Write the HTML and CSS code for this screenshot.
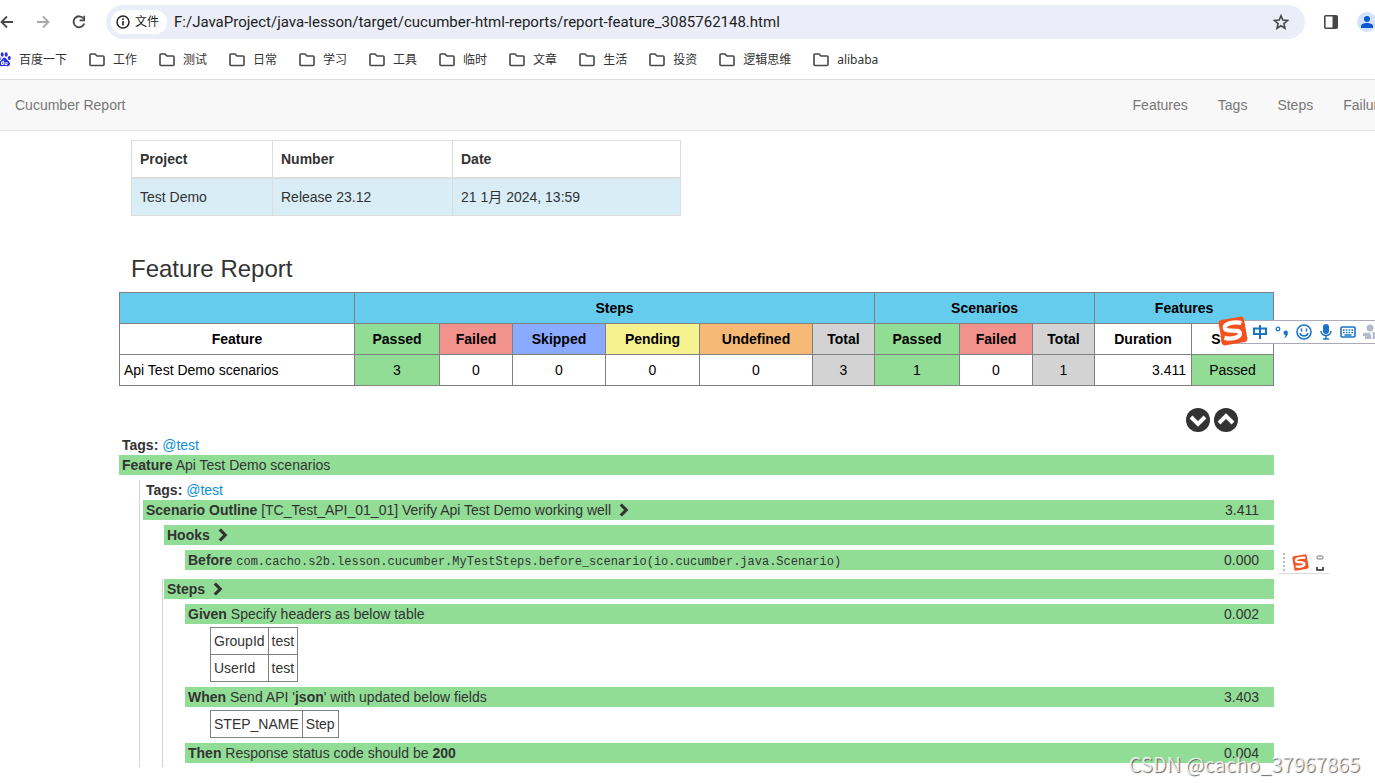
FILE: index.html
```html
<!DOCTYPE html>
<html lang="zh-CN">
<head>
<meta charset="utf-8">
<title>Cucumber Report</title>
<link rel="stylesheet" href="styles.css">
</head>
<body>
<svg class="defs" aria-hidden="true">
  <symbol id="folder" viewBox="0 0 16 14"><path d="M2 1h4l2 2h6a1 1 0 0 1 1 1v7.500a1 1 0 0 1-1 1H2a1 1 0 0 1-1-1V2a1 1 0 0 1 1-1z" fill="none" stroke="#474747" stroke-width="1.600"/></symbol>
  <symbol id="chevron" viewBox="0 0 10 14"><path d="M1.800 1.500L7.200 7l-5.400 5.500" fill="none" stroke="#333" stroke-width="3.200"/></symbol>
  <symbol id="sogou" viewBox="0 0 28 28"><g transform="rotate(-10 14 14)"><rect x="2" y="2" width="24" height="24" rx="3" fill="#f4511e"/><path d="M23 8C17 5.500 7 5.500 7 10c0 4.500 13 2.500 13 7 0 4.500-9 4.500-15 2" fill="none" stroke="#fff" stroke-width="4"/></g></symbol>
</svg>

<header class="browser">
  <div class="toolbar">
    <button class="tool" aria-label="后退"><svg width="14" height="14" viewBox="0 0 14 14"><path d="M13 7H2M7 1.500L1.500 7 7 12.500" fill="none" stroke="#474747" stroke-width="1.800"/></svg></button>
    <button class="tool" aria-label="前进"><svg width="14" height="14" viewBox="0 0 14 14"><path d="M1 7h11M7 1.500L12.500 7 7 12.500" fill="none" stroke="#a8a8a8" stroke-width="1.800"/></svg></button>
    <button class="tool" aria-label="刷新"><svg width="14" height="14" viewBox="0 0 14 14"><path d="M11.500 3.500A5.500 5.500 0 1 0 12.300 8.500" fill="none" stroke="#474747" stroke-width="1.800"/><path d="M13 .8v5.400H7.600V4.600h3.800V.8z" fill="#474747"/></svg></button>
    <div class="omnibox">
      <button class="origin"><svg width="14" height="14" viewBox="0 0 14 14"><circle cx="7" cy="7" r="6" fill="none" stroke="#222" stroke-width="1.500"/><path d="M7 6v4.500M7 3.300v1.600" stroke="#222" stroke-width="1.600"/></svg>文件</button>
      <input class="address" type="text" aria-label="地址" value="F:/JavaProject/java-lesson/target/cucumber-html-reports/report-feature_3085762148.html">
      <button class="tool" aria-label="收藏"><svg width="16" height="16" viewBox="0 0 16 16"><path d="M8 1.800l1.800 4.300 4.700.4-3.600 3.100 1.100 4.600L8 11.700l-4 2.500 1.100-4.600L1.500 6.500l4.700-.4z" fill="none" stroke="#474747" stroke-width="1.600"/></svg></button>
    </div>
    <button class="tool panel" aria-label="侧边栏"><svg width="16" height="16" viewBox="0 0 16 16"><rect x="1.800" y="1.800" width="12.400" height="12.400" rx="1" fill="none" stroke="#474747" stroke-width="1.600"/><path d="M9.500 2H14v12H9.500z" fill="#474747"/></svg></button>
    <button class="tool avatar" aria-label="用户"><svg width="20" height="20" viewBox="0 0 20 20"><circle cx="10" cy="10" r="10" fill="#d3e3fd"/><circle cx="10" cy="7" r="3" fill="#0b57d0"/><path d="M4 16v-2c0-4 12-4 12 0v2z" fill="#0b57d0"/></svg></button>
  </div>
  <nav class="bookmarks" aria-label="书签">
    <a href="#"><svg class="paw" width="13" height="15" viewBox="0 0 13 15"><g fill="#2932e1"><ellipse cx="1.200" cy="6.500" rx="1.500" ry="2"/><ellipse cx="4.200" cy="2.500" rx="1.500" ry="2.200"/><ellipse cx="8.200" cy="2.500" rx="1.500" ry="2.200"/><ellipse cx="11.300" cy="6" rx="1.500" ry="2"/><path d="M6.200 5.500C4.500 5.500 4 8 2 9.500c-2 1.800-1 5 2 4.800 2-.3 3-.3 5 0 3 .2 4-2.800 2-4.800C9 8 8 5.500 6.200 5.500z"/></g><path d="M5.300 8.500v4H3.500V10h1.800M7 10v2.500h2V10" fill="none" stroke="#fff"/></svg>百度一下</a>
    <a href="#"><svg class="folder"><use href="#folder"/></svg>工作</a>
    <a href="#"><svg class="folder"><use href="#folder"/></svg>测试</a>
    <a href="#"><svg class="folder"><use href="#folder"/></svg>日常</a>
    <a href="#"><svg class="folder"><use href="#folder"/></svg>学习</a>
    <a href="#"><svg class="folder"><use href="#folder"/></svg>工具</a>
    <a href="#"><svg class="folder"><use href="#folder"/></svg>临时</a>
    <a href="#"><svg class="folder"><use href="#folder"/></svg>文章</a>
    <a href="#"><svg class="folder"><use href="#folder"/></svg>生活</a>
    <a href="#"><svg class="folder"><use href="#folder"/></svg>投资</a>
    <a href="#"><svg class="folder"><use href="#folder"/></svg>逻辑思维</a>
    <a href="#"><svg class="folder"><use href="#folder"/></svg>alibaba</a>
  </nav>
</header>

<nav class="navbar">
  <span class="brand">Cucumber Report</span>
  <div class="links"><a href="#">Features</a><a href="#">Tags</a><a href="#">Steps</a><a href="#">Failures</a></div>
</nav>

<main class="report">
  <table class="build">
    <colgroup><col class="c-project"><col class="c-number"><col></colgroup>
    <thead><tr><th>Project</th><th>Number</th><th>Date</th></tr></thead>
    <tbody><tr><td>Test Demo</td><td>Release 23.12</td><td>21 1月 2024, 13:59</td></tr></tbody>
  </table>

  <h2>Feature Report</h2>

  <table class="stats">
    <colgroup><col class="w235"><col class="w85"><col class="w73"><col class="w93"><col class="w94"><col class="w113"><col class="w62"><col class="w85"><col class="w73"><col class="w62"><col class="w97"><col class="w82"></colgroup>
    <thead>
      <tr class="groups"><th></th><th colspan="6">Steps</th><th colspan="3">Scenarios</th><th colspan="2">Features</th></tr>
      <tr><th>Feature</th><th class="passed">Passed</th><th class="failed">Failed</th><th class="skipped">Skipped</th><th class="pending">Pending</th><th class="undefined">Undefined</th><th class="total">Total</th><th class="passed">Passed</th><th class="failed">Failed</th><th class="total">Total</th><th>Duration</th><th>Status</th></tr>
    </thead>
    <tbody>
      <tr><td class="name">Api Test Demo scenarios</td><td class="passed">3</td><td>0</td><td>0</td><td>0</td><td>0</td><td class="total">3</td><td class="passed">1</td><td>0</td><td class="total">1</td><td class="duration">3.411</td><td class="passed">Passed</td></tr>
    </tbody>
  </table>

  <div class="toggles">
    <button aria-label="Expand all"><svg width="24" height="24" viewBox="0 0 24 24"><circle cx="12" cy="12" r="12" fill="#333"/><path d="M5 9l7 7 7-7" fill="none" stroke="#fff" stroke-width="4"/></svg></button>
    <button aria-label="Collapse all"><svg width="24" height="24" viewBox="0 0 24 24"><circle cx="12" cy="12" r="12" fill="#333"/><path d="M5 15l7-7 7 7" fill="none" stroke="#fff" stroke-width="4"/></svg></button>
  </div>

  <section class="feature">
    <div class="tags"><b>Tags:</b> <a href="#">@test</a></div>
    <div class="bar"><span><b>Feature</b> Api Test Demo scenarios</span></div>
    <div class="element">
      <div class="tags"><b>Tags:</b> <a href="#">@test</a></div>
      <div class="bar"><span><b>Scenario Outline</b> [TC_Test_API_01_01] Verify Api Test Demo working well <svg class="chevron"><use href="#chevron"/></svg></span><span>3.411</span></div>
      <div class="group">
        <div class="bar"><span><b>Hooks</b> <svg class="chevron"><use href="#chevron"/></svg></span></div>
        <div class="step">
          <div class="bar"><span><b>Before</b> <code>com.cacho.s2b.lesson.cucumber.MyTestSteps.before_scenario(io.cucumber.java.Scenario)</code></span><span>0.000</span></div>
        </div>
      </div>
      <div class="group steps">
        <div class="bar"><span><b>Steps</b> <svg class="chevron"><use href="#chevron"/></svg></span></div>
        <div class="step">
          <div class="bar"><span><b>Given</b> Specify headers as below table</span><span>0.002</span></div>
          <table class="args"><tr><td>GroupId</td><td>test</td></tr><tr><td>UserId</td><td>test</td></tr></table>
        </div>
        <div class="step">
          <div class="bar"><span><b>When</b> Send API '<b>json</b>' with updated below fields</span><span>3.403</span></div>
          <table class="args"><tr><td>STEP_NAME</td><td>Step</td></tr></table>
        </div>
        <div class="step">
          <div class="bar"><span><b>Then</b> Response status code should be <b>200</b></span><span>0.004</span></div>
        </div>
      </div>
    </div>
  </section>
</main>

<div class="ime">
  <svg class="ime-logo"><use href="#sogou"/></svg>
  <div class="ime-keys">
    <svg width="16" height="16" viewBox="0 0 16 16"><path d="M2 4.500h12v5.500H2zM8 1v14" fill="none" stroke="#1a73c8" stroke-width="2"/></svg>
    <svg width="16" height="16" viewBox="0 0 16 16"><circle cx="4" cy="5" r="1.800" fill="none" stroke="#1a73c8" stroke-width="1.300"/><path d="M9.500 8.800a2.200 2.200 0 1 1 4.400 0c0 3-1.500 4.700-4 5.400 1-1 1.600-2 1.500-3.200-1.100 0-1.900-.9-1.900-2.200z" fill="#1a73c8"/></svg>
    <svg width="16" height="16" viewBox="0 0 16 16"><circle cx="8" cy="8" r="7" fill="none" stroke="#1a73c8" stroke-width="1.600"/><path d="M5.500 4.500v3M10.500 4.500v3M4 9c1 4 7 4 8 0" fill="none" stroke="#1a73c8" stroke-width="1.500"/></svg>
    <svg width="16" height="16" viewBox="0 0 16 16"><rect x="5" y="0" width="6" height="10" rx="3" fill="#1a73c8"/><path d="M3 7c0 6 10 6 10 0M8 11v4M5 15h6" fill="none" stroke="#1a73c8" stroke-width="1.500"/></svg>
    <svg width="16" height="16" viewBox="0 0 16 16"><rect x="1" y="3" width="14" height="10" rx="1" fill="none" stroke="#1a73c8" stroke-width="1.600"/><path d="M3 6h10M3 8.500h10" stroke="#1a73c8" stroke-width="1.500" stroke-dasharray="1.600 1.200"/><path d="M4.500 11h7" stroke="#1a73c8" stroke-width="1.500"/></svg>
    <svg width="16" height="16" viewBox="0 0 16 16"><circle cx="8" cy="4" r="3.500" fill="#b4bccb"/><path d="M1 9l14-1v7H3v-3H1z" fill="#b4bccb"/><path d="M8 10l2-1v6" fill="none" stroke="#fff" stroke-width="1.500"/></svg>
  </div>
</div>
<div class="ime-mini">
  <svg class="grip" viewBox="0 0 2 20"><path d="M1 0v20" stroke="#bbb" stroke-width="2" stroke-dasharray="2 2"/></svg>
  <svg class="mini-logo"><use href="#sogou"/></svg>
  <svg class="mini-mark" viewBox="0 0 8 16"><rect x="1" y="1" width="6" height="3" rx="1" fill="none" stroke="#777"/><path d="M1 12v3h6v-3" fill="none" stroke="#222" stroke-width="1.500"/></svg>
</div>
<div class="watermark">CSDN @cacho_37967865</div>
</body>
</html>
```

FILE: styles.css
```css
* { box-sizing: border-box; }
body {
  margin: 0;
  min-height: 100vh;
  position: relative;
  overflow: hidden;
  background: #fff;
  color: #333;
  font: 14px/20px "Liberation Sans", "Noto Sans CJK SC", sans-serif;
}
a { color: #0b8fdb; text-decoration: none; }
button { border: 0; padding: 0; background: none; font: inherit; color: inherit; }
svg { display: block; flex: none; }
.defs { position: absolute; width: 0; height: 0; }

.browser {
  overflow: hidden;
  border-bottom: 1px solid #dedede;
  font-family: "Noto Sans", "Noto Sans CJK SC", sans-serif;
}
.toolbar { display: flex; align-items: center; height: 44px; gap: 22px; }
.omnibox {
  display: flex;
  align-items: center;
  flex: 1;
  height: 34px;
  margin-left: -2px;
  padding: 0 16px 0 5px;
  border-radius: 17px;
  background: #ebeef8;
}
.origin {
  display: flex;
  align-items: center;
  gap: 5px;
  height: 24px;
  padding: 0 8px 0 5px;
  border-radius: 12px;
  background: #fff;
  font-size: 12px;
  color: #222;
}
.address {
  flex: 1;
  min-width: 0;
  margin-left: 7px;
  padding: 0;
  border: 0;
  background: none;
  color: #222;
  font: 15px/20px Roboto, sans-serif;
}
.panel { margin-left: -4px; }
.avatar { margin: 0 -2px 0 -4px; }
.bookmarks { display: flex; align-items: center; gap: 22px; height: 35px; padding-bottom: 4px; }
.bookmarks a { display: flex; align-items: center; gap: 8px; color: #333; font-size: 12px; white-space: nowrap; }
.folder { width: 16px; height: 14px; }
.paw { margin-left: -2px; }

.navbar {
  display: flex;
  justify-content: space-between;
  margin-right: -33px;
  padding: 15px;
  border-bottom: 1px solid #e7e7e7;
  background: #f8f8f8;
  color: #777;
}
.links { display: flex; gap: 30px; }
.links a { color: #777; }

.report { padding: 9px 101px 16px 119px; }
table { border-collapse: collapse; }
.build { width: 550px; margin-left: 12px; table-layout: fixed; }
.c-project { width: 141px; }
.c-number { width: 180px; }
.build th, .build td { padding: 8px; border: 1px solid #ddd; text-align: left; }
.build th { border-bottom-width: 2px; }
.build td { background: #d9edf7; }
h2 { margin: 40px 12px 10px; font-size: 24px; line-height: 26px; font-weight: 400; }

.stats { width: 100%; table-layout: fixed; color: #000; }
.stats th, .stats td { height: 31px; padding: 5px; border: 1px solid gray; text-align: center; }
.stats .groups th { background: #66ccee; }
.stats .name { padding-left: 4px; text-align: left; }
.stats .duration { text-align: right; }
.w235 { width: 235px; }
.w113 { width: 113px; }
.w97 { width: 97px; }
.w94 { width: 94px; }
.w93 { width: 93px; }
.w85 { width: 85px; }
.w82 { width: 82px; }
.w73 { width: 73px; }
.w62 { width: 62px; }
.passed { background: #92dd96; }
.failed { background: #f2928c; }
.skipped { background: #8aaaff; }
.pending { background: #f5f28f; }
.undefined { background: #f5b975; }
.total { background: #d3d3d3; }

.toggles { display: flex; justify-content: flex-end; gap: 4px; padding: 22px 36px 3px 0; }
.tags { padding-left: 3px; }
.bar { display: flex; justify-content: space-between; padding: 0 15px 0 3px; background: #92dd96; white-space: nowrap; }
.chevron { display: inline-block; width: 10px; height: 14px; margin-left: 4px; vertical-align: -2px; }
.element { margin: 5px 0 0 20px; padding-left: 3px; border-left: 1px solid #d3d3d3; }
.group { margin: 5px 0 0 19px; padding-left: 1px; border-left: 1px solid transparent; }
.steps { margin-top: 9px; padding-bottom: 4px; border-left-color: #d3d3d3; }
.step { margin: 5px 0 0 21px; }
.args { margin: 3px 0 0 25px; }
.args td { height: 27px; padding: 3px; border: 1px solid gray; }
code { font: 12px/12px "Liberation Mono", monospace; }

.ime { position: absolute; top: 316px; right: 0; width: 157px; height: 30px; }
.ime-logo { position: absolute; left: 0; top: 0; width: 30px; height: 30px; }
.ime-keys {
  display: flex;
  align-items: center;
  gap: 6px;
  height: 24px;
  margin: 4px 0 0 16px;
  padding-left: 18px;
  overflow: hidden;
  border: solid #aab;
  border-width: 1px 0;
  background: #fff;
}
.ime-mini {
  position: absolute;
  top: 552px;
  right: 46px;
  display: flex;
  align-items: center;
  gap: 7px;
  width: 50px;
  height: 22px;
  padding-left: 4px;
  border-bottom: 1px solid #ddd;
}
.grip { width: 2px; height: 20px; }
.mini-logo { width: 17px; height: 17px; }
.mini-mark { width: 8px; height: 16px; }
.watermark {
  position: absolute;
  right: 15px;
  bottom: 7px;
  color: rgba(255, 255, 255, 0.8);
  font-family: "Noto Sans CJK SC", sans-serif;
  font-size: 20px;
  line-height: 24px;
  text-shadow: 1px 1px 1px #666;
}
```
